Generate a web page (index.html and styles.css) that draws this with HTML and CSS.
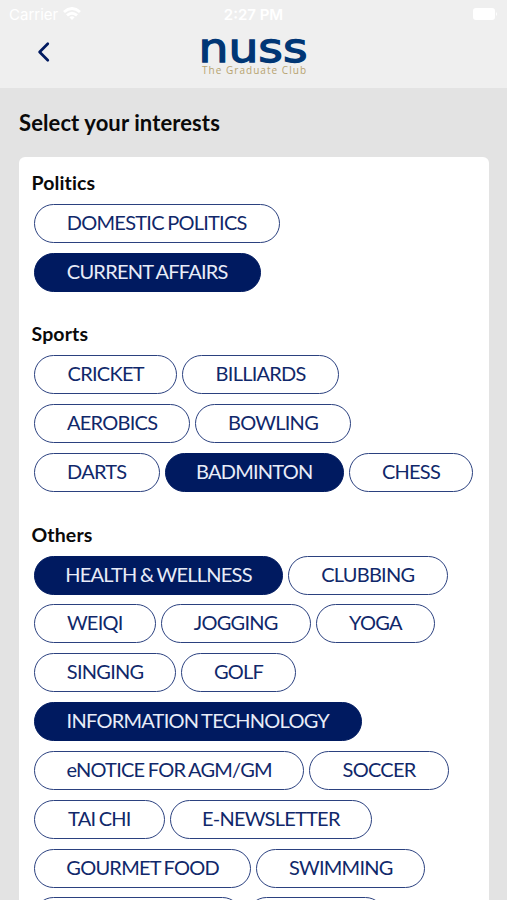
FILE: index.html
```
<!DOCTYPE html>
<html lang="en">
<head>
<meta charset="utf-8">
<title>Select your interests</title>
<link rel="stylesheet" href="styles.css">
</head>
<body>
<header class="header">
  <div class="status">
    <div class="carrier"><span>Carrier</span>
      <svg width="18" height="14" viewBox="0 0 18 14" fill="none" stroke="#fff" stroke-width="2.9"><path d="M1 5Q9-2 17 5M4 8.4Q9 4 14 8.4"/><path d="M6.3 10.3Q9 8.3 11.7 10.3L9 13Z" fill="#fff" stroke="none"/></svg>
    </div>
    <span class="time">2:27 PM</span>
    <svg class="battery" width="25" height="12" viewBox="0 0 25 12" fill="#fff"><rect width="22" height="12" rx="3"/><path d="M23 4q2 2 0 4z"/></svg>
  </div>
  <div class="nav">
    <svg class="back" width="14" height="22" viewBox="0 0 14 22" fill="none" stroke="#001a60" stroke-width="2.7" stroke-linecap="round" stroke-linejoin="round"><path d="M10.8 2.7L2.6 11L10.8 19.3"/></svg>
    <svg class="logo" width="108" height="40" viewBox="0 0 108 40">
      <text class="brand" x="-1.5" y="25" textLength="109" lengthAdjust="spacingAndGlyphs">nuss</text>
      <text class="tagline" x="2" y="37" textLength="104">The Graduate Club</text>
    </svg>
  </div>
</header>
<main class="page">
  <h1>Select your interests</h1>
  <div class="card">
    <section>
      <h2>Politics</h2>
      <div class="row"><span class="chip domestic">DOMESTIC POLITICS</span></div>
      <div class="row"><span class="chip on affairs">CURRENT AFFAIRS</span></div>
    </section>
    <section>
      <h2>Sports</h2>
      <div class="row"><span class="chip cricket">CRICKET</span><span class="chip billiards">BILLIARDS</span></div>
      <div class="row"><span class="chip aerobics">AEROBICS</span><span class="chip bowling">BOWLING</span></div>
      <div class="row"><span class="chip darts">DARTS</span><span class="chip on badminton">BADMINTON</span><span class="chip chess">CHESS</span></div>
    </section>
    <section>
      <h2>Others</h2>
      <div class="row"><span class="chip on health">HEALTH &amp; WELLNESS</span><span class="chip clubbing">CLUBBING</span></div>
      <div class="row"><span class="chip weiqi">WEIQI</span><span class="chip jogging">JOGGING</span><span class="chip yoga">YOGA</span></div>
      <div class="row"><span class="chip singing">SINGING</span><span class="chip golf">GOLF</span></div>
      <div class="row"><span class="chip on technology">INFORMATION TECHNOLOGY</span></div>
      <div class="row"><span class="chip enotice">eNOTICE FOR AGM/GM</span><span class="chip soccer">SOCCER</span></div>
      <div class="row"><span class="chip taichi">TAI CHI</span><span class="chip newsletter">E-NEWSLETTER</span></div>
      <div class="row"><span class="chip gourmet">GOURMET FOOD</span><span class="chip swimming">SWIMMING</span></div>
      <div class="row"><span class="chip wide"></span><span class="chip medium"></span></div>
    </section>
  </div>
</main>
</body>
</html>
```
FILE: styles.css
```
* { box-sizing: border-box; }
body {
  margin: 0;
  height: 900px;
  overflow: hidden;
  background: #e3e3e3;
  color: #0a0a0a;
  font-family: Lato, sans-serif;
}
.header { height: 88px; background: #efefef; }
.status {
  display: grid;
  grid-template-columns: 1fr auto 1fr;
  align-items: center;
  height: 28px;
  padding: 0 9px;
  color: #fff;
  font: 15px Inter, sans-serif;
}
.carrier { display: flex; align-items: center; gap: 5px; }
.time { font-weight: 600; font-size: 15px; }
.battery { justify-self: end; }
.nav {
  display: grid;
  grid-template-columns: 1fr auto 1fr;
  align-items: start;
  padding: 9px 37px 0;
}
.back { margin-top: 4px; }
.logo { overflow: visible; }
.brand { font: 41px "DejaVu Sans", sans-serif; fill: #003675; stroke: #003675; stroke-width: 1.3px; }
.tagline { font: 10px "Open Sans", sans-serif; fill: #b7a36f; }
.page { height: 812px; padding: 0 18.5px 0 19px; overflow: hidden; }
h1 { margin: 0; padding-top: 21px; height: 69px; font-size: 22px; line-height: 28px; font-weight: 700; letter-spacing: 0.1px; }
.card { height: 743px; overflow: hidden; padding: 14px 12.5px; background: #fff; border-radius: 6px 6px 0 0; }
section { margin-bottom: 30.5px; }
h2 { margin: 0 0 9px; font-size: 19.5px; line-height: 24px; font-weight: 700; letter-spacing: 0.12px; }
.row { display: flex; gap: 5px; height: 39px; margin: 0 0 9.85px 2.5px; }
.chip {
  flex: none;
  height: 39px;
  border: 1px solid #2b417f;
  border-radius: 20px;
  color: #10286a;
  font-size: 20px;
  line-height: 35px;
  letter-spacing: -0.75px;
  word-spacing: -1px;
  text-align: center;
  white-space: nowrap;
}
.on { background: #001a60; border-color: #001a60; color: #e8ecf8; }

.domestic { width: 245.5px; }
.affairs { width: 226.5px; }
.cricket { width: 143.3px; }
.billiards { width: 156.7px; }
.aerobics { width: 156.3px; }
.bowling { width: 155.5px; }
.darts { width: 125.5px; }
.badminton { width: 179.5px; }
.chess { width: 124px; }
.health { width: 249px; }
.clubbing { width: 159.5px; }
.weiqi { width: 121.5px; }
.jogging { width: 150.5px; }
.yoga { width: 119px; }
.singing { width: 142.3px; }
.golf { width: 114.5px; }
.technology { width: 327.5px; }
.enotice { width: 270.3px; }
.soccer { width: 139.5px; }
.taichi { width: 130.8px; }
.newsletter { width: 202px; }
.gourmet { width: 217.3px; }
.swimming { width: 169px; }
.wide { width: 208px; }
.medium { width: 138px; }
```
